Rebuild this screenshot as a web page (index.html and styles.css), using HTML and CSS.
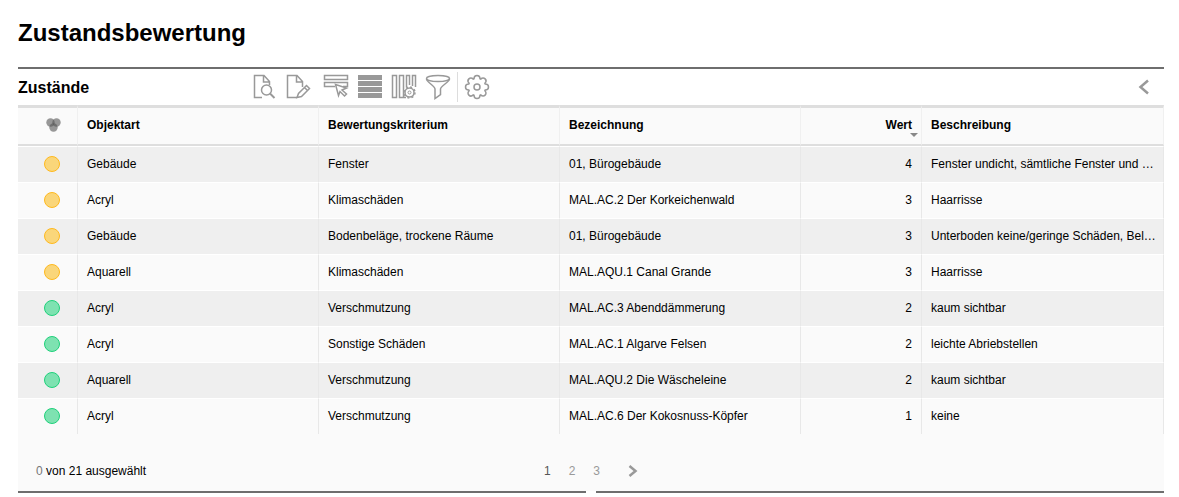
FILE: index.html
```
<!DOCTYPE html>
<html lang="de">
<head>
    <meta charset="UTF-8">
    <meta name="viewport" content="width=device-width, initial-scale=1.0">
    <title>Zustandsbewertung</title>
    <link rel="stylesheet" href="styles.css">
</head>
<body>
    <h1>Zustandsbewertung</h1>

    <section class="panel">
        <header class="panel-header">
            <h2>Zustände</h2>
            <div class="toolbar">
                <button type="button" class="tool">
                    <svg width="26" height="26" viewBox="0 0 26 26">
                        <path d="M10 23.5H2.500V1.500H12L17.500 7.500V11M11.500 2V8H17"/>
                        <circle cx="14.500" cy="16" r="5"/>
                        <path d="M18 19.500L22.500 24" stroke-width="2"/>
                    </svg>
                </button>
                <button type="button" class="tool">
                    <svg width="26" height="26" viewBox="0 0 26 26">
                        <path d="M11 23.5H1.500V1.500H11L16.500 7.500V13M10.500 2V8H16"/>
                        <path d="M11 23.500L12.500 19.500L20.500 11.500L23.500 14.500L15.500 22.500ZM18.500 13.500L21.500 16.500"/>
                    </svg>
                </button>
                <button type="button" class="tool tool-wide">
                    <svg width="26" height="26" viewBox="0 0 26 26">
                        <path d="M1.500 1.500H24.500V5.500H1.500ZM12 12.500H1.500V8.500H24.500V12.500H20"/>
                        <path d="M12.500 10.500L23.500 14L19 16L23.500 20L21.500 22L17 17.500L15.500 21.500Z"/>
                    </svg>
                </button>
                <button type="button" class="tool">
                    <svg width="26" height="26" viewBox="0 0 26 26">
                        <path class="solid" d="M1 1H25V6H1ZM1 7H25V12H1ZM1 13H25V18H1ZM1 19H25V24H1Z"/>
                    </svg>
                </button>
                <button type="button" class="tool">
                    <svg width="26" height="26" viewBox="0 0 26 26">
                        <path d="M1.500 1.500H5.500V23.500H1.500ZM8.500 1.500H12.500V23.500H8.500ZM15.500 13V1.500H18.500V11M21.500 12V1.500H24.500V13M15 23.500H13"/>
                        <circle cx="18.500" cy="18.500" r="4.500" stroke-width="1.500"/>
                        <circle cx="18.500" cy="18.500" r="5.500" stroke-dasharray="2 2.320"/>
                        <circle cx="18.500" cy="18.500" r="1.500" stroke-width="1"/>
                    </svg>
                </button>
                <button type="button" class="tool">
                    <svg width="26" height="26" viewBox="0 0 26 26">
                        <ellipse cx="13" cy="4.500" rx="11.500" ry="3"/>
                        <path d="M1.500 5C1.500 8 10 12 10 15V24.500L15.500 20.500V15C15.500 12 24.500 8 24.500 5"/>
                    </svg>
                </button>
                <span class="divider"></span>
                <button type="button" class="tool">
                    <svg width="26" height="26" viewBox="0 0 26 26">
                        <path d="M10 4.800C10 .4 16 .4 16 4.800L16.700 5.100C19.800 2 24 6.200 20.900 9.300L21.200 10C25.600 10 25.600 16 21.200 16L20.900 16.700C24 19.800 19.800 24 16.700 20.900L16 21.200C16 25.600 10 25.600 10 21.200L9.300 20.900C6.200 24 2 19.800 5.100 16.700L4.800 16C.4 16 .4 10 4.800 10L5.100 9.300C2 6.200 6.200 2 9.300 5.100Z"/>
                        <circle cx="13" cy="13" r="3"/>
                    </svg>
                </button>
            </div>
            <button type="button" class="collapse">
                <svg width="12" height="16" viewBox="0 0 12 16">
                    <path d="M10 1.500L2.500 8L10 14.500" stroke-width="2.500"/>
                </svg>
            </button>
        </header>

        <table>
            <colgroup>
                <col class="col-status">
                <col class="col-text">
                <col class="col-text">
                <col class="col-text">
                <col class="col-value">
                <col>
            </colgroup>
            <thead>
                <tr>
                    <th class="status">
                        <svg width="18" height="14" viewBox="0 0 18 14">
                            <circle class="blob" cx="6.500" cy="4.500" r="4.200"/>
                            <circle class="blob" cx="12.500" cy="4.500" r="4.200"/>
                            <circle class="blob" cx="9.500" cy="9.500" r="4.200"/>
                        </svg>
                    </th>
                    <th>Objektart</th>
                    <th>Bewertungskriterium</th>
                    <th>Bezeichnung</th>
                    <th class="value sorted">Wert</th>
                    <th>Beschreibung</th>
                </tr>
            </thead>
            <tbody>
                <tr>
                    <td class="status"><span class="dot yellow"></span></td>
                    <td>Gebäude</td>
                    <td>Fenster</td>
                    <td>01, Bürogebäude</td>
                    <td class="value">4</td>
                    <td>Fenster undicht, sämtliche Fenster und …</td>
                </tr>
                <tr>
                    <td class="status"><span class="dot yellow"></span></td>
                    <td>Acryl</td>
                    <td>Klimaschäden</td>
                    <td>MAL.AC.2 Der Korkeichenwald</td>
                    <td class="value">3</td>
                    <td>Haarrisse</td>
                </tr>
                <tr>
                    <td class="status"><span class="dot yellow"></span></td>
                    <td>Gebäude</td>
                    <td>Bodenbeläge, trockene Räume</td>
                    <td>01, Bürogebäude</td>
                    <td class="value">3</td>
                    <td>Unterboden keine/geringe Schäden, Bel…</td>
                </tr>
                <tr>
                    <td class="status"><span class="dot yellow"></span></td>
                    <td>Aquarell</td>
                    <td>Klimaschäden</td>
                    <td>MAL.AQU.1 Canal Grande</td>
                    <td class="value">3</td>
                    <td>Haarrisse</td>
                </tr>
                <tr>
                    <td class="status"><span class="dot green"></span></td>
                    <td>Acryl</td>
                    <td>Verschmutzung</td>
                    <td>MAL.AC.3 Abenddämmerung</td>
                    <td class="value">2</td>
                    <td>kaum sichtbar</td>
                </tr>
                <tr>
                    <td class="status"><span class="dot green"></span></td>
                    <td>Acryl</td>
                    <td>Sonstige Schäden</td>
                    <td>MAL.AC.1 Algarve Felsen</td>
                    <td class="value">2</td>
                    <td>leichte Abriebstellen</td>
                </tr>
                <tr>
                    <td class="status"><span class="dot green"></span></td>
                    <td>Aquarell</td>
                    <td>Verschmutzung</td>
                    <td>MAL.AQU.2 Die Wäscheleine</td>
                    <td class="value">2</td>
                    <td>kaum sichtbar</td>
                </tr>
                <tr>
                    <td class="status"><span class="dot green"></span></td>
                    <td>Acryl</td>
                    <td>Verschmutzung</td>
                    <td>MAL.AC.6 Der Kokosnuss-Köpfer</td>
                    <td class="value">1</td>
                    <td>keine</td>
                </tr>
            </tbody>
        </table>

        <footer class="panel-footer">
            <p class="selection"><span>0</span> von 21 ausgewählt</p>
            <nav class="pages">
                <a href="#" class="current">1</a>
                <a href="#">2</a>
                <a href="#">3</a>
                <a href="#" class="next">
                    <svg width="10" height="12" viewBox="0 0 10 12">
                        <path d="M1.500 1L7.500 6L1.500 11" stroke-width="2.500"/>
                    </svg>
                </a>
            </nav>
        </footer>
        <div class="bottom-rule"><span></span><span></span></div>
    </section>
</body>
</html>
```
FILE: styles.css
```
/* Global Styles */
* {
    box-sizing: border-box;
}

body {
    margin: 0;
    padding: 18px 15px 0 18px;
    font-family: Arial, "Liberation Sans", sans-serif;
    font-size: 12px;
    color: #000;
    background-color: #fff;
}

h1 {
    margin: 0 0 19px;
    font-size: 24px;
    line-height: 30px;
}

h2 {
    width: 234px;
    margin: 0;
    padding-top: 2px;
    font-size: 16px;
}

button {
    padding: 0;
    border: none;
    background: none;
    cursor: pointer;
}

svg {
    display: block;
    fill: none;
    stroke: #999;
    stroke-width: 1.5;
}

.solid {
    fill: #999;
    stroke: none;
}

.panel {
    border-top: 2px solid #6e6e6e;
}

/* Toolbar */
.panel-header {
    display: flex;
    align-items: center;
    height: 36px;
}

.toolbar {
    display: flex;
    align-items: center;
    gap: 8px;
}

.tool-wide {
    margin-left: 3px;
}

.divider {
    width: 1px;
    height: 30px;
    margin: 0 -2px;
    background-color: #ddd;
}

.collapse {
    margin-left: auto;
    margin-right: 14px;
}

/* Table */
table {
    width: 100%;
    table-layout: fixed;
    border-collapse: separate;
    border-spacing: 0;
    background-color: #fafafa;
}

.col-status {
    width: 60px;
}

.col-text {
    width: 241px;
}

.col-value {
    width: 121px;
}

th,
td {
    height: 36px;
    padding: 0 1px 2px 9px;
    border-right: 1px solid #e8e8e8;
    border-top: 1px solid #fff;
    text-align: left;
    white-space: nowrap;
    overflow: hidden;
    text-overflow: ellipsis;
}

th {
    height: 41px;
    border-top: 3px solid #dedede;
    border-bottom: 2px solid #dedede;
    border-right-color: #f0f0f0;
}

tbody tr:nth-child(odd) {
    background-color: #efefef;
}

.value {
    padding-right: 9px;
    text-align: right;
}

/* Sort arrow in the corner of the column */
.sorted {
    position: relative;
}

.sorted::after {
    content: "";
    position: absolute;
    right: 3px;
    bottom: 7px;
    border: 4px solid transparent;
    border-top-color: #888;
    border-bottom: none;
}

.status {
    padding-left: 26px;
}

.blob {
    fill: #555;
    fill-opacity: 0.6;
    stroke: none;
}

.dot {
    display: block;
    width: 16px;
    height: 16px;
    border: 1px solid;
    border-radius: 50%;
}

.yellow {
    border-color: #ffb91e;
    background-color: #fad67a;
}

.green {
    border-color: #1fd17b;
    background-color: #7ee2b1;
}

/* Footer */
.panel-footer {
    display: grid;
    grid-template-columns: 1fr auto 1fr;
    align-items: center;
    height: 57px;
    padding: 16px 18px 0;
    background-color: #fafafa;
}

.selection {
    margin: 0;
}

.selection span {
    color: #777;
}

.pages {
    display: flex;
    align-items: center;
    gap: 18px;
}

.pages a {
    color: #999;
    text-decoration: none;
}

.pages .current {
    color: #555;
}

.pages .next {
    margin-left: 10px;
}

.bottom-rule {
    display: flex;
    gap: 10px;
}

.bottom-rule span {
    flex: 1;
    height: 2px;
    background-color: #6e6e6e;
}
```
